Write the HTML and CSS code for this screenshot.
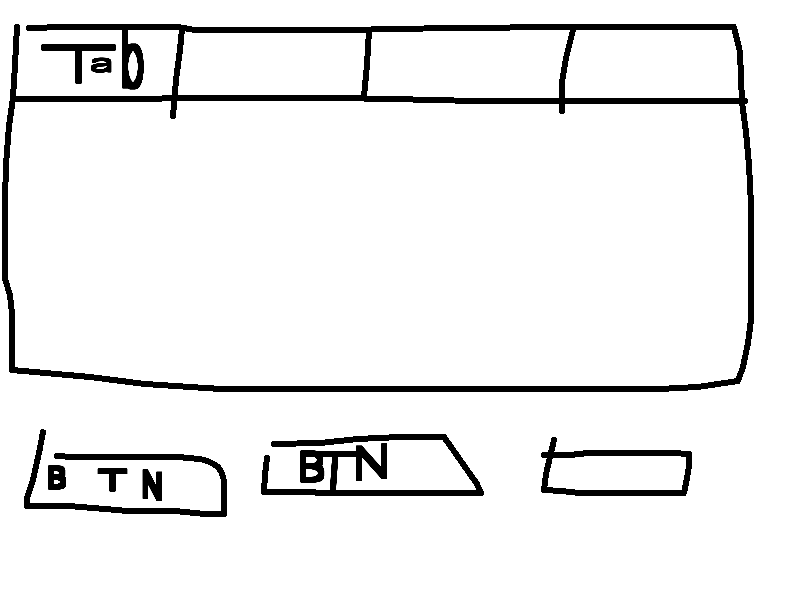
FILE: index.html
```
<!DOCTYPE html>
<html lang="en">
<head>
<meta charset="utf-8">
<title>Tab wireframe</title>
<link rel="stylesheet" href="styles.css">
</head>
<body>
<main class="sheet">
  <section class="panel">
    <svg class="ink" viewBox="0 0 800 420">
      <defs>
        <filter id="marker" x="-20%" y="-20%" width="140%" height="140%"><feMorphology operator="dilate" radius="2 2"/><feComponentTransfer><feFuncA type="linear" slope="4"/></feComponentTransfer></filter>
        <filter id="marker-wide" x="-20%" y="-20%" width="140%" height="140%"><feMorphology operator="dilate" radius="1 2"/><feComponentTransfer><feFuncA type="linear" slope="4"/></feComponentTransfer></filter>
        <filter id="marker-fine" x="-20%" y="-20%" width="140%" height="140%"><feMorphology operator="dilate" radius="1 1"/><feComponentTransfer><feFuncA type="linear" slope="3"/></feComponentTransfer></filter>
      </defs>
      <path d="M17 27L15 65L13 98L9 126L6 165L5 200V279L10 295L12 314V370L90 377L145 384L221 389H660L698 387L738 381L743 367L748 343L751 320V205L749 165L746 132L742 102L740 52L734 27H572L450 28L345 30H195L178 27H66L29 28"/>
      <path d="M14 99H155L170 98H335L392 99L475 101H745"/>
      <path d="M182 29L180 50L176 80L173 116M369 31L367 65L364 96M573 30L566 58L562 82V111"/>
      <g class="label">
        <g class="wide"><text transform="translate(34 81) scale(3.15 1)" font-size="46">T</text></g>
        <g class="fine"><text transform="translate(90 71) scale(2.2 1)" font-size="21">a</text></g>
        <g class="marked"><text transform="translate(121 86) scale(.85 1.6)" font-size="46">b</text></g>
      </g>
    </svg>
    <nav class="tabs">
      <div class="tab"></div>
      <div class="tab"></div>
      <div class="tab"></div>
      <div class="tab"></div>
    </nav>
  </section>
  <section class="actions">
    <div class="button">
      <svg class="ink" viewBox="0 420 245 110">
        <path d="M43 432L39 453L33 480L27 498V506H69L105 509L128 511H175L205 514H224V482Q223 473 218 467Q209 460 199 459L178 457H73L57 456"/>
        <g class="label">
          <g class="marked"><text transform="translate(47 487) scale(1.15 1)" font-size="26">B</text></g>
          <g class="marked"><text transform="translate(97 489) scale(2.1 1)" font-size="24">T</text></g>
          <g class="marked"><text transform="translate(142 496) scale(.78 1) skewY(7)" font-size="34">N</text></g>
        </g>
      </svg>
    </div>
    <div class="button">
      <svg class="ink" viewBox="245 420 275 110">
        <path d="M267 458L265 475L264 492H314L317 493H481L477 484L444 437H399L358 439L320 443L274 444"/>
        <g class="label">
          <g class="marked"><text transform="translate(298 480) scale(1.15 1)" font-size="37">B</text></g>
          <g class="wide"><text transform="translate(296 491) skewX(-4) scale(2.3 1)" font-size="52">T</text></g>
          <g class="marked"><text transform="translate(353 479) skewY(-5) scale(1.15 1)" font-size="42">N</text></g>
        </g>
      </svg>
    </div>
    <div class="button">
      <svg class="ink" viewBox="520 420 280 110">
        <path d="M554 440L550 457L546 474L544 490L562 491L579 493H684L687 478L689 466V454L673 453H588L570 455H544"/>
      </svg>
    </div>
  </section>
</main>
</body>
</html>
```
FILE: styles.css
```
* { box-sizing: border-box; }
body { margin: 0; background: #fff; color: #000; font-family: Inter, "DejaVu Sans", sans-serif; }
.sheet { width: 800px; height: 600px; overflow: hidden; }
.panel, .button { display: grid; }
.panel > *, .button > * { grid-area: 1 / 1; }
.panel { height: 420px; }
.ink { display: block; width: 100%; height: 100%; fill: none; stroke: #000; stroke-width: 6; stroke-linecap: round; stroke-linejoin: round; shape-rendering: crispEdges; }
.tabs { display: grid; grid-template-columns: 181px 188px 201px 230px; height: 100px; }
.actions { display: grid; grid-template-columns: 245px 275px 280px; height: 110px; }
.label text { fill: #000; font-weight: 100; stroke-width: .3; }
.marked { filter: url(#marker); }
.wide { filter: url(#marker-wide); }
.fine { filter: url(#marker-fine); }
```
